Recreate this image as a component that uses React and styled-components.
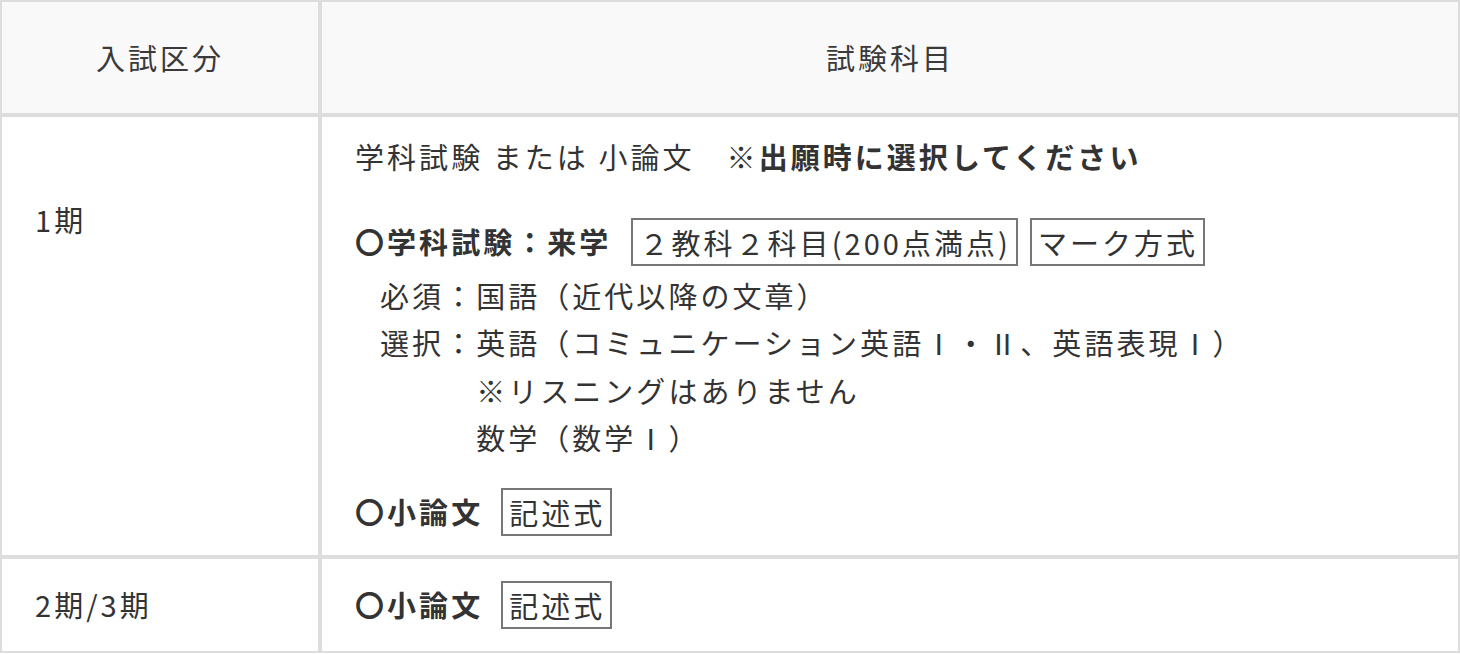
import React from "react";
import styled, { createGlobalStyle } from "styled-components";

const GlobalStyle = createGlobalStyle`
  html, body {
    margin: 0;
    padding: 0;
    background: #fff;
  }
  body {
    font-family: "Noto Sans CJK JP", "Noto Sans", sans-serif;
    color: #333;
  }
`;

const Table = styled.table`
  width: 1460px;
  border-collapse: separate;
  border-spacing: 0;
  table-layout: fixed;
  font-size: 29px;
  letter-spacing: 0.105em;
  line-height: 47.6px;
`;

const HeadCell = styled.th`
  box-sizing: border-box;
  width: ${(p) => (p.$first ? "320px" : "auto")};
  height: 115px;
  border: 2px solid #ddd;
  background: #f9f9f9;
  font-weight: 400;
  text-align: center;
  vertical-align: middle;
  padding: 0;
  color: #3a3a3a;
`;

const Cell = styled.td`
  box-sizing: border-box;
  border: 2px solid #ddd;
  vertical-align: ${(p) => p.$align || "top"};
  padding: ${(p) => p.$pad || "22px 33px"};
`;

const Lead = styled.p`
  margin: 0 0 37px;
`;

const Strong = styled.strong`
  font-weight: 700;
`;

const Heading = styled.div`
  display: flex;
  align-items: center;
  margin: ${(p) => p.$margin || "0"};
`;

const Title = styled.span`
  font-weight: 700;
  margin-right: ${(p) => p.$gap || "18px"};
`;

const Tag = styled.span`
  display: inline-block;
  border: 2px solid #777;
  padding: 0 5px 0 6px;
  line-height: 44px;
  margin-right: 12px;
`;

const List = styled.div`
  display: grid;
  grid-template-columns: auto 1fr;
  padding-left: 25px;
  margin-top: 6px;
`;

const Label = styled.span`
  grid-column: 1;
`;

const Value = styled.span`
  grid-column: 2;
`;

const items = [
  { label: "必須：", value: "国語（近代以降の文章）" },
  { label: "選択：", value: "英語（コミュニケーション英語Ⅰ・Ⅱ、英語表現Ⅰ）" },
  { label: "", value: "※リスニングはありません" },
  { label: "", value: "数学（数学Ⅰ）" },
];

export default function App() {
  return (
    <>
      <GlobalStyle />
      <Table>
        <thead>
          <tr>
            <HeadCell $first>入試区分</HeadCell>
            <HeadCell>試験科目</HeadCell>
          </tr>
        </thead>
        <tbody>
          <tr>
            <Cell $pad="79px 33px 0">1期</Cell>
            <Cell $pad="16px 33px 19px">
              <Lead>
                学科試験 または 小論文　※<Strong>出願時に選択してください</Strong>
              </Lead>
              <Heading>
                <Title $gap="20px">〇学科試験：来学</Title>
                <Tag>２教科２科目(200点満点)</Tag>
                <Tag>マーク方式</Tag>
              </Heading>
              <List>
                {items.map((it, i) => (
                  <React.Fragment key={i}>
                    <Label>{it.label}</Label>
                    <Value>{it.value}</Value>
                  </React.Fragment>
                ))}
              </List>
              <Heading $margin="26px 0 0">
                <Title>〇小論文</Title>
                <Tag>記述式</Tag>
              </Heading>
            </Cell>
          </tr>
          <tr>
            <Cell $align="middle">2期/3期</Cell>
            <Cell>
              <Heading>
                <Title>〇小論文</Title>
                <Tag>記述式</Tag>
              </Heading>
            </Cell>
          </tr>
        </tbody>
      </Table>
    </>
  );
}
